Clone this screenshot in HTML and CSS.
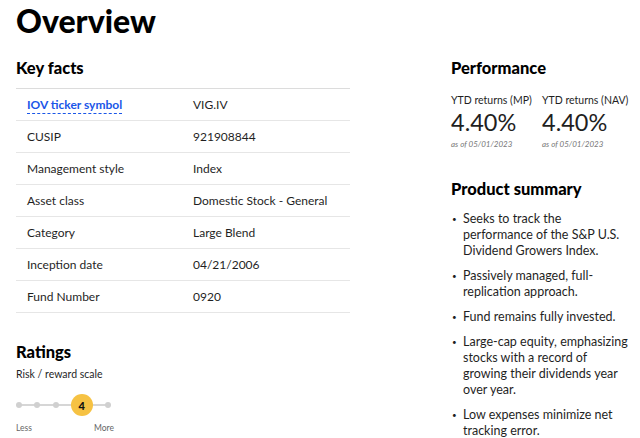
FILE: index.html
```html
<!DOCTYPE html>
<html>
<head>
<meta charset="utf-8">
<link rel="stylesheet" href="styles.css">
</head>
<body>
<h1 class="title">Overview</h1>
<div class="layout">
  <section class="left">
    <h2 class="heading">Key facts</h2>
    <div class="facts">
      <div class="row"><span class="label"><a class="link">IOV ticker symbol</a></span><span class="value">VIG.IV</span></div>
      <div class="row"><span class="label">CUSIP</span><span class="value">921908844</span></div>
      <div class="row"><span class="label">Management style</span><span class="value">Index</span></div>
      <div class="row"><span class="label">Asset class</span><span class="value">Domestic Stock - General</span></div>
      <div class="row"><span class="label">Category</span><span class="value">Large Blend</span></div>
      <div class="row"><span class="label">Inception date</span><span class="value">04/21/2006</span></div>
      <div class="row"><span class="label">Fund Number</span><span class="value">0920</span></div>
    </div>
    <h2 class="heading ratings-h">Ratings</h2>
    <div class="scale-label">Risk / reward scale</div>
    <div class="scale">
      <div class="track">
        <span class="dot"></span>
        <span class="dot"></span>
        <span class="dot"></span>
        <span class="active">4</span>
        <span class="dot"></span>
      </div>
      <div class="ends"><span>Less</span><span>More</span></div>
    </div>
  </section>
  <section class="right">
    <h2 class="heading">Performance</h2>
    <div class="perf">
      <div class="stat">
        <div class="stat-label">YTD returns (MP)</div>
        <div class="stat-value">4.40%</div>
        <div class="stat-date">as of 05/01/2023</div>
      </div>
      <div class="stat">
        <div class="stat-label">YTD returns (NAV)</div>
        <div class="stat-value">4.40%</div>
        <div class="stat-date">as of 05/01/2023</div>
      </div>
    </div>
    <h2 class="heading summary-h">Product summary</h2>
    <ul class="summary">
      <li>Seeks to track the performance of the S&amp;P U.S. Dividend Growers Index.</li>
      <li>Passively managed, full-replication approach.</li>
      <li>Fund remains fully invested.</li>
      <li>Large-cap equity, emphasizing stocks with a record of growing their dividends year over year.</li>
      <li>Low expenses minimize net tracking error.</li>
    </ul>
  </section>
</div>
</body>
</html>
```
FILE: styles.css
```css
* { box-sizing: border-box; }
html, body { margin: 0; padding: 0; background: #fff; }
body {
  font-family: Lato, "Noto Sans", sans-serif;
  color: #1f1f1f;
  padding: 0 0 0 16px;
  overflow: hidden;
  height: 438px;
}
.title {
  margin: 0;
  padding-top: 1px;
  font-size: 32px;
  font-weight: 900;
  line-height: 40px;
  color: #000;
}
.layout {
  display: flex;
  gap: 101px;
  margin-top: 16px;
}
.left { width: 334px; flex-shrink: 0; }
.right { width: 182px; flex-shrink: 0; }
.heading {
  margin: 0;
  font-size: 16.5px;
  font-weight: 900;
  line-height: 22px;
  color: #000;
}
.facts {
  margin-top: 9px;
  border-top: 1px solid #dcdcdc;
}
.row {
  display: flex;
  height: 32px;
  align-items: center;
  border-bottom: 1px solid #e6e6e6;
  font-size: 12px;
}
.label { width: 177px; padding-left: 11px; }
.link {
  color: #1a56e8;
  font-weight: 700;
  border-bottom: 1px dashed #1a56e8;
  padding-bottom: 1px;
}
.ratings-h { margin-top: 28px; }
.scale-label { font-size: 10.5px; margin-top: 5px; }
.scale { width: 98px; margin-top: 13px; }
.track {
  position: relative;
  display: flex;
  align-items: center;
  justify-content: space-between;
  height: 24px;
  width: 95px;
  margin-left: 0;
}
.track::before {
  content: "";
  position: absolute;
  left: 2px; right: 2px; top: 11px;
  height: 2px;
  background: #d6d6d6;
}
.dot {
  position: relative;
  width: 6px; height: 6px;
  border-radius: 50%;
  background: #d0d0d0;
}
.active {
  position: relative;
  width: 22px; height: 22px;
  border-radius: 50%;
  background: #f6c243;
  font-size: 11px;
  font-weight: 900;
  display: flex;
  align-items: center;
  justify-content: center;
  color: #111;
}
.ends {
  display: flex;
  justify-content: space-between;
  font-size: 8.5px;
  color: #666;
  margin-top: 6px;
}
.perf {
  display: flex;
  margin-top: 15px;
}
.stat { width: 99px; white-space: nowrap; }
.stat-label { font-size: 10.5px; }
.stat-value { font-size: 23.5px; font-weight: 400; margin-top: 2px; line-height: 28px; }
.stat-date { font-size: 8px; font-style: italic; color: #777; margin-top: 3px; }
.summary-h { margin-top: 29px; }
.summary {
  margin: 11px 0 0;
  padding: 0 0 0 12px;
  list-style: none;
  font-size: 12.5px;
  line-height: 16px;
}
.summary li { position: relative; margin-bottom: 9px; }
.summary li::before {
  content: "•";
  position: absolute;
  left: -11px;
  font-size: 8px;
}
```
